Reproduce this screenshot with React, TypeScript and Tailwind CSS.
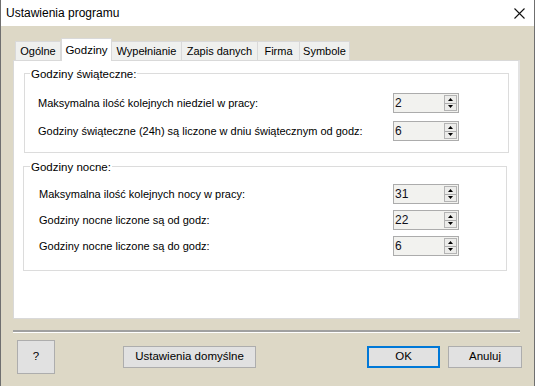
const Spin = ({ value }: { value: string }) => {
    return (
        <div className="w-[66px] h-[20px] border border-[#acacac] bg-[#f2f2ef] flex items-center shrink-0">
            <span className="pl-[1px] text-[12px] leading-none text-[#10101a]">{value}</span>
            <div className="ml-auto mr-[1px] w-[13px] h-[16px] border border-[#b4b4b4] flex flex-col bg-[#ececea]">
                <div className="flex-1 flex items-center justify-center border-b border-[#acacac]">
                    <svg width="5" height="3" viewBox="0 0 5 3">
                        <polygon points="2.5,0 5,3 0,3" fill="#000" />
                    </svg>
                </div>
                <div className="flex-1 flex items-center justify-center">
                    <svg width="5" height="3" viewBox="0 0 5 3">
                        <polygon points="0,0 5,0 2.5,3" fill="#000" />
                    </svg>
                </div>
            </div>
        </div>
    );
};

const Row = ({ label, value }: { label: string; value: string }) => {
    return (
        <div className="flex items-center justify-between h-[20px]">
            <span>{label}</span>
            <Spin value={value} />
        </div>
    );
};

const tabs = [
    { name: "Ogólne", w: "w-[46px]", active: false },
    { name: "Godziny", w: "w-[51px]", active: true },
    { name: "Wypełnianie", w: "w-[70px]", active: false },
    { name: "Zapis danych", w: "w-[76px]", active: false },
    { name: "Firma", w: "w-[42px]", active: false },
    { name: "Symbole", w: "w-[50px]", active: false },
];

const App = () => {
    return (
        <div className="w-[535px] h-[386px] flex flex-col bg-[#ddd8c6] border-x border-[#6f6f6f] font-['Liberation_Sans',Arial,sans-serif] text-[11px] text-black overflow-hidden">
            {/* title bar */}
            <div className="h-[26px] shrink-0 bg-white flex items-center justify-between pl-[5px] pr-[9px]">
                <span className="text-[12px]">Ustawienia programu</span>
                <svg width="11" height="11" viewBox="0 0 11 11">
                    <path d="M0.5 0.5 L10.5 10.5 M10.5 0.5 L0.5 10.5" stroke="#111" strokeWidth="1.1" />
                </svg>
            </div>

            <div className="pl-[12px] pt-[12px] flex flex-col">
                {/* tabs */}
                <div className="flex items-end h-[22px] ml-[2px]">
                    {tabs.map((t) =>
                        t.active ? (
                            <div
                                key={t.name}
                                className={`${t.w} h-[23px] -mb-[1px] relative z-10 bg-white border-x border-t border-[#d9d9d9] flex items-start justify-center pt-[3px] text-[11.5px]`}
                            >
                                {t.name}
                            </div>
                        ) : (
                            <div
                                key={t.name}
                                className={`${t.w} h-[19px] bg-[#eff0ee] border-t border-r first:border-l border-[#d9d9d9] flex items-center justify-center text-[11px]`}
                            >
                                {t.name}
                            </div>
                        )
                    )}
                </div>

                {/* panel */}
                <div className="w-[507px] h-[259px] bg-white border border-[#d9d9d9] border-r-[2px] border-r-[#e3e3e3] flex flex-col">
                    <div className="relative ml-[10px] mt-[12px] w-[485px] h-[80px] border border-[#dcdcdc] pt-[19px] pl-[13px] pr-[49px] flex flex-col gap-[8px]">
                        <span className="absolute -top-[8px] left-[5px] bg-white px-[1px] text-[11.5px]">
                            Godziny świąteczne:
                        </span>
                        <Row label="Maksymalna ilość kolejnych niedziel w pracy:" value="2" />
                        <Row label="Godziny świąteczne (24h) są liczone w dniu świątecznym od godz:" value="6" />
                    </div>

                    <div className="relative ml-[9px] mt-[13px] w-[484px] h-[105px] border border-[#dcdcdc] pt-[17px] pl-[15px] pr-[47px] flex flex-col gap-[6px]">
                        <span className="absolute -top-[8px] left-[6px] bg-white px-[1px] text-[11.5px]">
                            Godziny nocne:
                        </span>
                        <Row label="Maksymalna ilość kolejnych nocy w pracy:" value="31" />
                        <Row label="Godziny nocne liczone są od godz:" value="22" />
                        <Row label="Godziny nocne liczone są do godz:" value="6" />
                    </div>
                </div>

                {/* separator */}
                <div className="w-[507px] mt-[11px] h-[3px] border-t-2 border-[#a0a0a0] border-b border-b-white" />

                {/* buttons */}
                <div className="flex items-start mt-[7px]">
                    <button className="ml-[4px] w-[38px] h-[34px] bg-[#e1e1e1] border border-[#adadad] text-[11.5px]">
                        ?
                    </button>
                    <button className="ml-[68px] mt-[6px] w-[133px] h-[22px] bg-[#e1e1e1] border border-[#adadad] text-[11.5px]">
                        Ustawienia domyślne
                    </button>
                    <button className="ml-[111px] mt-[6px] w-[73px] h-[22px] bg-[#e1e1e1] border-2 border-[#0078d7] text-[11.5px]">
                        OK
                    </button>
                    <button className="ml-[8px] mt-[6px] w-[74px] h-[22px] bg-[#e1e1e1] border border-[#adadad] text-[11.5px]">
                        Anuluj
                    </button>
                </div>
            </div>
        </div>
    );
};

export default App;
